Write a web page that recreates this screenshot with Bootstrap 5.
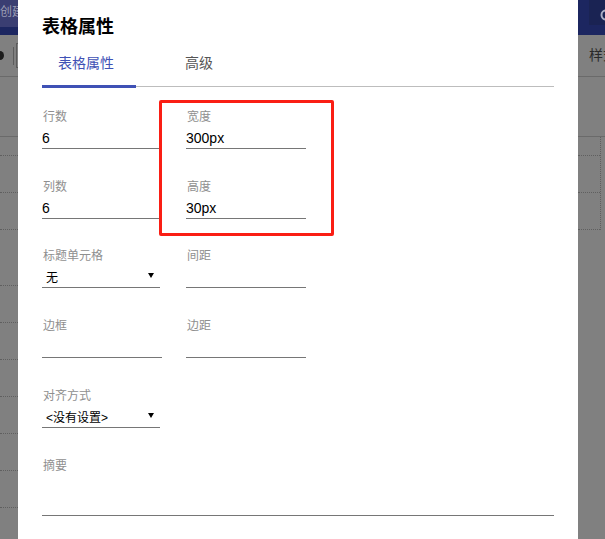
<!DOCTYPE html>
<html lang="zh-CN">
<head>
    <meta charset="UTF-8">
    <meta name="viewport" content="width=device-width, initial-scale=1.0">
    <title>表格属性</title>
    <link href="https://cdn.jsdelivr.net/npm/bootstrap@5.3.0/dist/css/bootstrap.min.css" rel="stylesheet">
    <style>
        html, body {
            height: 100%;
            overflow: hidden;
        }
        body {
            background: #808080;
            font-family: "Liberation Sans", "Noto Sans CJK SC", sans-serif;
            font-size: 14px;
            color: #000;
        }
        /* dimmed page behind the dialog */
        .top-bar {
            height: 35px;
            background: #1c2660;
        }
        .top-tab {
            width: 18px;
            height: 27px;
            padding-top: 3px;
            background: #3a3e72;
            color: #9b9db4;
            font-size: 12px;
            white-space: nowrap;
        }
        .top-search {
            width: 16px;
            height: 25px;
            background: #1a2353;
            padding: 4px 0 0 11px;
            overflow: hidden;
        }
        .tool-bar {
            height: 42px;
            border-bottom: 1px solid #6a6a6a;
        }
        .tool-dot {
            width: 8px;
            height: 9px;
            margin-left: -4px;
            border-radius: 50%;
            background: #1c1c1c;
        }
        .tool-sep {
            width: 1px;
            height: 18px;
            margin-left: 9px;
            background: #5c5c5c;
        }
        .tool-box {
            width: 8px;
            height: 25px;
            margin-left: 2px;
            border: 1px solid #5c5c5c;
        }
        .tool-text {
            width: 16px;
            color: #2a2a2a;
            font-size: 14px;
            white-space: nowrap;
        }
        .bg-rows {
            padding-top: 59px;
        }
        .bg-head {
            height: 1px;
            background: #6a6a6a;
        }
        .bg-row {
            height: 37px;
            border-bottom: 1px dotted #5f5f5f;
        }
        .bg-row-first {
            height: 19px;
        }
        .bg-row-tall {
            height: 56px;
        }
        .bg-left {
            width: 18px;
        }
        .bg-right {
            width: 27px;
        }
        .bg-cells {
            width: 23px;
            border-right: 1px dotted #5f5f5f;
        }
        /* dialog */
        .table-modal {
            overflow: hidden;
        }
        .table-dialog {
            max-width: 560px;
            margin: 0 0 0 18px;
        }
        .table-content {
            height: 539px;
            padding: 16px 24px 0;
            border: 0;
            border-radius: 0;
        }
        .table-title {
            margin: 0;
            font-size: 18px;
            line-height: 22px;
            font-weight: 700;
        }
        .table-tabs {
            height: 49px;
            margin-bottom: 20px;
            border-bottom: 1px solid #bdbdbd;
        }
        .table-tabs .nav-link {
            height: 49px;
            min-width: 94px;
            padding: 15px 16px 0;
            margin: 0;
            border: 0;
            border-radius: 0;
            background: none;
            color: #555;
            font-size: 14px;
            line-height: 20px;
        }
        .table-tabs .nav-link.active {
            color: #3f51b5;
            border-bottom: 3px solid #3f51b5;
            margin-bottom: -1px;
            height: 50px;
        }
        .table-tabs .nav-item + .nav-item {
            margin-left: 33px;
        }
        .field-row {
            gap: 24px;
            margin-bottom: 28px;
        }
        .field-row-short {
            margin-bottom: 27px;
        }
        .field {
            width: 120px;
        }
        .field-label {
            display: block;
            height: 18px;
            margin: 0;
            padding: 1px 0 0 1px;
            color: #8f8f8f;
            font-size: 12px;
            line-height: 18px;
        }
        .field-input {
            display: block;
            width: 100%;
            height: 24px;
            padding: 2px 0 0;
            border: 0;
            border-bottom: 1px solid #767676;
            border-radius: 0;
            background: none;
            color: #000;
            font-size: 14px;
            line-height: 20px;
        }
        .field-input:focus {
            box-shadow: none;
            border-color: #767676;
        }
        .field-select {
            width: 118px;
            padding: 5px 20px 0 4px;
            font-size: 12px;
            line-height: 18px;
            background-color: transparent;
            background-image: url("data:image/svg+xml,%3csvg xmlns='http://www.w3.org/2000/svg' viewBox='0 0 6 5'%3e%3cpath d='M0 0h6L3 5z'/%3e%3c/svg%3e");
            background-repeat: no-repeat;
            background-position: 106px 9px;
            background-size: 6px 5px;
        }
        .field-wide {
            width: 512px;
        }
        .field-area {
            height: 42px;
        }
        .mark-box {
            position: absolute;
            left: 141px;
            top: 100px;
            width: 175px;
            height: 136px;
            border: 3px solid #fa1e14;
            border-radius: 2px;
            pointer-events: none;
        }
    </style>
</head>
<body>
    <div class="top-bar d-flex justify-content-between align-items-start">
        <div class="top-tab">创建</div>
        <div class="top-search">
            <svg width="12" height="12" viewBox="0 0 12 12" fill="none" stroke="#a9adc4" stroke-width="2"><circle cx="6" cy="6" r="4.5"/></svg>
        </div>
    </div>
    <div class="tool-bar d-flex justify-content-between align-items-center">
        <div class="d-flex align-items-center">
            <div class="tool-dot"></div>
            <div class="tool-sep"></div>
            <div class="tool-box"></div>
        </div>
        <div class="tool-text">样式</div>
    </div>
    <div class="bg-rows d-flex justify-content-between">
        <div class="bg-left">
            <div class="bg-head"></div>
            <div class="bg-row bg-row-first"></div>
            <div class="bg-row"></div>
            <div class="bg-row"></div>
            <div class="bg-row bg-row-tall"></div>
            <div class="bg-row"></div>
            <div class="bg-row"></div>
            <div class="bg-row"></div>
            <div class="bg-row"></div>
            <div class="bg-row"></div>
            <div class="bg-row"></div>
        </div>
        <div class="bg-right">
            <div class="bg-head"></div>
            <div class="bg-cells">
                <div class="bg-row bg-row-first"></div>
                <div class="bg-row"></div>
                <div class="bg-row"></div>
            </div>
        </div>
    </div>

    <div class="modal d-block table-modal" tabindex="-1">
        <div class="modal-dialog table-dialog">
            <div class="modal-content table-content">
                <h5 class="table-title">表格属性</h5>
                <ul class="nav nav-tabs table-tabs">
                    <li class="nav-item"><a class="nav-link active" href="#">表格属性</a></li>
                    <li class="nav-item"><a class="nav-link" href="#">高级</a></li>
                </ul>
                <form>
                    <div class="d-flex field-row">
                        <div class="field">
                            <label class="field-label">行数</label>
                            <input class="form-control field-input" value="6">
                        </div>
                        <div class="field">
                            <label class="field-label">宽度</label>
                            <input class="form-control field-input" value="300px">
                        </div>
                    </div>
                    <div class="d-flex field-row field-row-short">
                        <div class="field">
                            <label class="field-label">列数</label>
                            <input class="form-control field-input" value="6">
                        </div>
                        <div class="field">
                            <label class="field-label">高度</label>
                            <input class="form-control field-input" value="30px">
                        </div>
                    </div>
                    <div class="d-flex field-row">
                        <div class="field">
                            <label class="field-label">标题单元格</label>
                            <select class="form-select field-input field-select">
                                <option>无</option>
                            </select>
                        </div>
                        <div class="field">
                            <label class="field-label">间距</label>
                            <input class="form-control field-input">
                        </div>
                    </div>
                    <div class="d-flex field-row">
                        <div class="field">
                            <label class="field-label">边框</label>
                            <input class="form-control field-input">
                        </div>
                        <div class="field">
                            <label class="field-label">边距</label>
                            <input class="form-control field-input">
                        </div>
                    </div>
                    <div class="d-flex field-row">
                        <div class="field">
                            <label class="field-label">对齐方式</label>
                            <select class="form-select field-input field-select">
                                <option>&lt;没有设置&gt;</option>
                            </select>
                        </div>
                    </div>
                    <div class="field-wide">
                        <label class="field-label">摘要</label>
                        <input class="form-control field-input field-area">
                    </div>
                </form>
                <div class="mark-box"></div>
            </div>
        </div>
    </div>

    <script src="https://cdn.jsdelivr.net/npm/bootstrap@5.3.0/dist/js/bootstrap.bundle.min.js"></script>
</body>
</html>
